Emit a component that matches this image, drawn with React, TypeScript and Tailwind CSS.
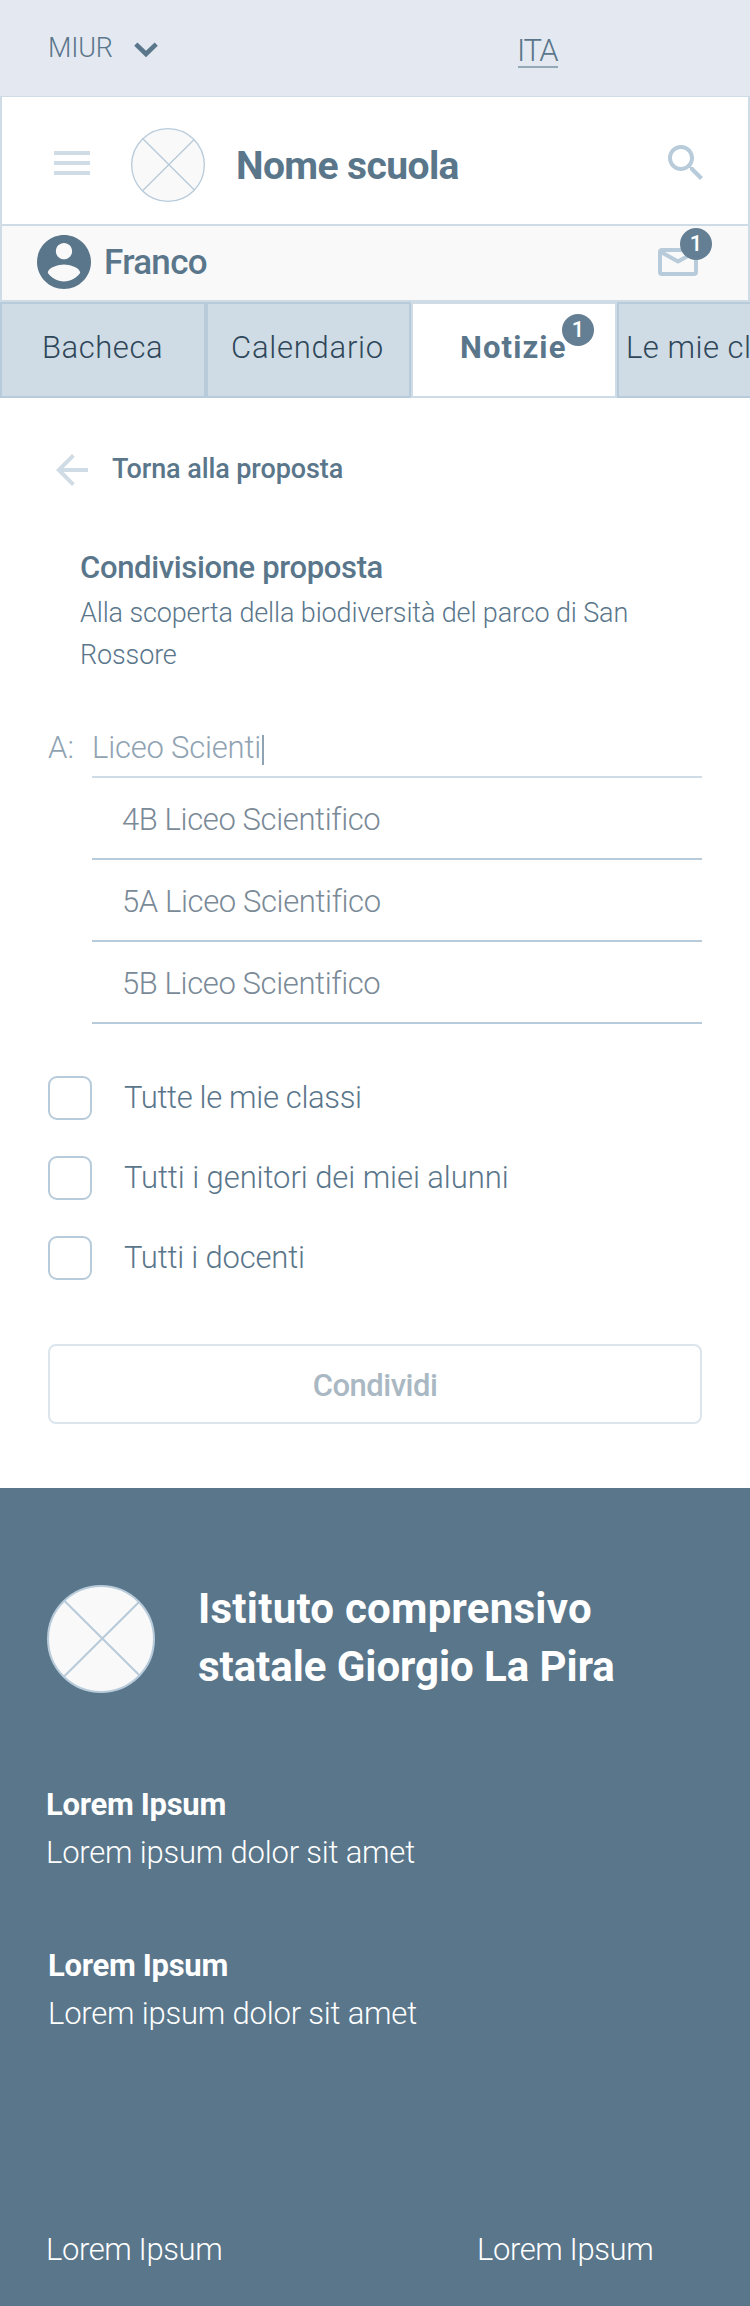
import type { ReactNode } from "react";
import clsx from "clsx";

function CrossedCircle({ size, strokeWidth, className }: { size: number; strokeWidth: number; className?: string }) {
  return (
    <svg width={size} height={size} viewBox="0 0 100 100" className={clsx("shrink-0", className)} aria-hidden="true">
      <circle cx="50" cy="50" r={50 - strokeWidth / 2} fill="#f9f9f9" stroke="#b8cbda" strokeWidth={strokeWidth} />
      <path d="M16 14.5 86 84M85 16 16 84.5" fill="none" stroke="#b8cbda" strokeWidth={strokeWidth} />
    </svg>
  );
}

function Badge({ children, className }: { children: ReactNode; className: string }) {
  return (
    <span
      className={clsx(
        "absolute flex size-8 items-center justify-center rounded-full bg-[#647f93] text-[22px] leading-none font-medium tracking-normal text-white",
        className,
      )}
    >
      {children}
    </span>
  );
}

function TopBar() {
  return (
    <div className="flex h-24 items-start bg-[#e4e9f1] pl-12 font-[350]">
      <div className="mt-8 flex h-8 w-[470px] items-center">
        <span className="w-[86px] text-[27px] leading-8 tracking-[-0.2px]">MIUR</span>
        <svg width="24" height="16" viewBox="0 0 24 16" className="mt-1" aria-hidden="true">
          <path d="M1.8 2.2 12 12 22.2 2.2" fill="none" stroke="#5a768b" strokeWidth="4.6" />
        </svg>
      </div>
      <a className="mt-[31px] h-[37px] w-10 border-b-2 border-[#94a9b8] text-[31px] leading-10 tracking-[-1.4px]">
        <span className="-ml-px">ITA</span>
      </a>
    </div>
  );
}

function Header() {
  return (
    <header className="border-x-2 border-t border-[#cfdce5]">
      <div className="flex h-[127px] items-start bg-white pl-[52px]">
        <svg width="36" height="24" viewBox="0 0 36 24" className="mt-[54px]" aria-hidden="true">
          <path d="M0 2h36M0 12h36M0 22h36" stroke="#cfdce5" strokeWidth="4" />
        </svg>
        <CrossedCircle size={74} strokeWidth={1.8} className="mt-[31px] ml-[41px]" />
        <h1 className="mt-[45px] ml-[31px] w-[424px] text-[39px] leading-12 font-bold tracking-[-0.6px]">Nome scuola</h1>
        <svg width="48" height="48" viewBox="0 0 24 24" className="mt-[42px] ml-[2px]" aria-hidden="true">
          <path
            fill="#b8cbda"
            d="M15.5 14h-.79l-.28-.27C15.41 12.59 16 11.11 16 9.5 16 5.91 13.09 3 9.5 3S3 5.91 3 9.5 5.91 16 9.5 16c1.61 0 3.09-.59 4.23-1.57l.27.28v.79l5 4.99L20.49 19l-4.99-5zm-6 0C7.01 14 5 11.99 5 9.5S7.01 5 9.5 5 14 7.01 14 9.5 11.99 14 9.5 14z"
          />
        </svg>
      </div>
      <div className="flex h-[78px] items-start border-y-2 border-[#cfdce5] bg-[#f9f9f9] pl-[35px]">
        <svg width="54" height="54" viewBox="2 2 20 20" className="mt-[9px]" aria-hidden="true">
          <path
            fill="#5a768b"
            d="M12 2C6.48 2 2 6.48 2 12s4.48 10 10 10 10-4.48 10-10S17.52 2 12 2zm0 3c1.66 0 3 1.34 3 3s-1.34 3-3 3-3-1.34-3-3 1.34-3 3-3zm0 14.2c-2.5 0-4.71-1.28-6-3.22.03-1.99 4-3.08 6-3.08 1.99 0 5.97 1.09 6 3.08-1.29 1.94-3.5 3.22-6 3.22z"
          />
        </svg>
        <span className="mt-[15px] ml-[13px] w-[554px] text-[35px] leading-11 font-medium tracking-[-0.7px]">Franco</span>
        <div className="relative mt-[22px] h-7 w-10">
          <svg width="40" height="28" viewBox="0 0 40 28" aria-hidden="true">
            <rect x="2" y="2" width="36" height="24" rx="2" fill="none" stroke="#b8cbda" strokeWidth="4" />
            <path d="M3 4 20 13.5 37 4" fill="none" stroke="#b8cbda" strokeWidth="4" strokeLinejoin="round" />
          </svg>
          <Badge className="-top-5 left-[22px]">1</Badge>
        </div>
      </div>
    </header>
  );
}

function Tabs() {
  const idle = "h-24 border-2 border-[#b8cbda] bg-[#cfdce5] pt-5 font-[350] text-[#2f475a]";
  return (
    <nav className="flex overflow-hidden text-[31px] leading-[48px] whitespace-nowrap">
      <div className={clsx(idle, "w-[206px] shrink-0 pl-[40px] tracking-[0.55px]")}>Bacheca</div>
      <div className={clsx(idle, "w-[205px] shrink-0 pl-[23px] tracking-[0.75px]")}>Calendario</div>
      <div className="relative h-24 w-[206px] shrink-0 border-2 border-[#cfdce5] bg-white pt-5 pl-[47px] font-bold tracking-[1.1px]">
        Notizie
        <Badge className="top-[10px] left-[149px]">1</Badge>
      </div>
      <div className={clsx(idle, "w-[133px] shrink-0 overflow-hidden border-r-0 pl-[7px] tracking-[0.5px]")}>Le mie cl</div>
    </nav>
  );
}

const checks = [
  { label: "Tutte le mie classi", spacing: "tracking-[-0.34px]" },
  { label: "Tutti i genitori dei miei alunni", spacing: "tracking-[-0.07px]" },
  { label: "Tutti i docenti", spacing: "tracking-[-0.2px]" },
];

function ShareForm() {
  return (
    <main className="h-[1090px] bg-white px-12 pt-12 font-[350]">
      <a className="flex h-12 items-center">
        <svg width="48" height="48" viewBox="0 0 24 24" aria-hidden="true">
          <path fill="#cfdce5" d="M20 11H7.83l5.59-5.59L12 4l-8 8 8 8 1.41-1.41L7.83 13H20v-2z" />
        </svg>
        <span className="-mt-px ml-4 text-[27px] font-medium tracking-[-0.1px]">Torna alla proposta</span>
      </a>
      <div className="mt-[54px] pl-8">
        <h2 className="text-[31px] leading-10 font-medium tracking-[-0.35px]">Condivisione proposta</h2>
        <p className="mt-1 text-[27px] leading-[42px] tracking-[-0.13px]">
          Alla scoperta della biodiversità del parco di San
          <br />
          Rossore
        </p>
      </div>
      <div className="mt-[52px] flex">
        <span className="w-11 text-[31px] leading-10 text-[#8fa3b3]">A:</span>
        <div className="w-[610px]">
          <div className="flex h-[50px] items-start border-b-2 border-[#cfdce5] text-[31px] leading-10 tracking-[-0.2px] text-[#8fa3b3]">
            Liceo Scienti
            <span className="mt-[7px] ml-px h-[30px] w-[2px] bg-[#8fa3b3]" />
          </div>
          <ul>
            {["4B Liceo Scientifico", "5A Liceo Scientifico", "5B Liceo Scientifico"].map((name) => (
              <li key={name} className="h-[82px] border-b-2 border-[#b8cbda] pt-[22px] pl-[30px] text-[31px] leading-10 tracking-[-0.38px] text-[#7a8a97]">
                {name}
              </li>
            ))}
          </ul>
        </div>
      </div>
      <div className="mt-[52px] flex flex-col gap-9">
        {checks.map(({ label, spacing }) => (
          <label key={label} className="flex h-11 items-center gap-8">
            <span className="size-11 rounded-[9px] border-2 border-[#b8cbda] bg-white" />
            <span className={clsx("text-[31px] leading-10", spacing)}>{label}</span>
          </label>
        ))}
      </div>
      <button className="mt-16 h-20 w-full rounded-lg border-2 border-[#dce5ec] pt-1 text-[31px] font-medium tracking-[-0.5px] text-[#a9b8c3]">
        Condividi
      </button>
    </main>
  );
}

function Footer() {
  return (
    <footer className="h-[818px] bg-[#5a768b] pl-[46px] text-[31px] font-light text-white">
      <div className="flex items-start pt-[92px]">
        <CrossedCircle size={108} strokeWidth={1.9} className="mt-[5px] ml-px" />
        <p className="ml-[43px] text-[42px] leading-[58px] font-bold">
          <span className="tracking-[0.25px]">Istituto comprensivo</span>
          <br />
          <span className="tracking-[-0.05px]">statale Giorgio La Pira</span>
        </p>
      </div>
      <div className="mt-[85px] leading-[48px]">
        <p className="font-bold tracking-[-0.3px]">Lorem Ipsum</p>
        <p className="tracking-[-0.2px]">Lorem ipsum dolor sit amet</p>
      </div>
      <div className="mt-[65px] pl-[2px] leading-[48px]">
        <p className="font-bold tracking-[-0.3px]">Lorem Ipsum</p>
        <p className="tracking-[-0.2px]">Lorem ipsum dolor sit amet</p>
      </div>
      <div className="mt-[192px] flex leading-10 tracking-[-0.4px]">
        <span className="w-[431px]">Lorem Ipsum</span>
        <span>Lorem Ipsum</span>
      </div>
    </footer>
  );
}

export default function App() {
  return (
    <div className="h-[2306px] w-[750px] overflow-hidden bg-white font-['Roboto',sans-serif] text-[#5a768b]">
      <TopBar />
      <Header />
      <Tabs />
      <ShareForm />
      <Footer />
    </div>
  );
}
